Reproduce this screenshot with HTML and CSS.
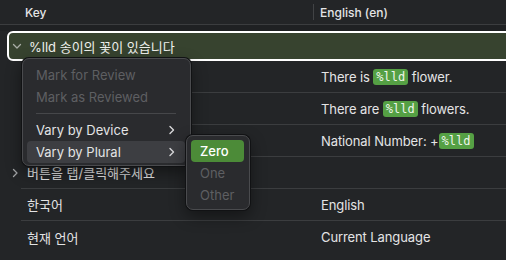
FILE: index.html
```html
<!DOCTYPE html>
<html lang="en">
<head>
<meta charset="UTF-8" />
<title>String Catalog</title>
<link rel="stylesheet" href="styles.css">
</head>
<body>
  <div class="catalog">
    <div class="header">
      <div class="head-key">Key</div>
      <div class="head-divider"></div>
      <div class="head-en">English (en)</div>
    </div>

    <div class="rows">
      <div class="row-selected">
        <svg class="disc-icon" width="10" height="10" viewBox="0 0 10 10"><path d="M1.5 3.5 L5 7 L8.5 3.5" fill="none" stroke="#a9ada6" stroke-width="1.3" stroke-linecap="round" stroke-linejoin="round"/></svg>
        <span class="sel-key">%lld 송이의 꽃이 있습니다</span>
      </div>

      <div class="row">
        <div class="disc"></div>
        <div class="cells">
          <div class="key"></div>
          <div class="en">There is <span class="token">%lld</span> flower.</div>
        </div>
      </div>
      <div class="row">
        <div class="disc"></div>
        <div class="cells">
          <div class="key"></div>
          <div class="en">There are <span class="token">%lld</span> flowers.</div>
        </div>
      </div>
      <div class="row">
        <div class="disc"></div>
        <div class="cells">
          <div class="key"></div>
          <div class="en">National Number: +<span class="token">%lld</span></div>
        </div>
      </div>
      <div class="row">
        <div class="disc">
          <svg width="10" height="10" viewBox="0 0 10 10"><path d="M3.5 1.5 L7 5 L3.5 8.5" fill="none" stroke="#a2a4a6" stroke-width="1.3" stroke-linecap="round" stroke-linejoin="round"/></svg>
        </div>
        <div class="cells">
          <div class="key">버튼을 탭/클릭해주세요</div>
          <div class="en"></div>
        </div>
      </div>
      <div class="row">
        <div class="disc"></div>
        <div class="cells">
          <div class="key">한국어</div>
          <div class="en">English</div>
        </div>
      </div>
      <div class="row last">
        <div class="disc"></div>
        <div class="cells">
          <div class="key">현재 언어</div>
          <div class="en">Current Language</div>
        </div>
      </div>
    </div>
  </div>

  <div class="menu">
    <div class="menu-item disabled">Mark for Review</div>
    <div class="menu-item disabled">Mark as Reviewed</div>
    <div class="menu-sep"></div>
    <div class="menu-item">Vary by Device
      <svg class="sub-arrow" width="8" height="10" viewBox="0 0 8 10"><path d="M2 1.5 L5.5 5 L2 8.5" fill="none" stroke="#d8d8da" stroke-width="1.4" stroke-linecap="round" stroke-linejoin="round"/></svg>
    </div>
    <div class="menu-item active">Vary by Plural
      <svg class="sub-arrow" width="8" height="10" viewBox="0 0 8 10"><path d="M2 1.5 L5.5 5 L2 8.5" fill="none" stroke="#d8d8da" stroke-width="1.4" stroke-linecap="round" stroke-linejoin="round"/></svg>
    </div>
  </div>

  <div class="submenu">
    <div class="menu-item chosen">Zero</div>
    <div class="menu-item disabled">One</div>
    <div class="menu-item disabled">Other</div>
  </div>
</body>
</html>
```

FILE: styles.css
```css
:root {
  --bg: #232527;
  --line: #3b3d3f;
  --text: #e3e4e5;
  --dim: #5e5f62;
  --sel-bg: #37432f;
  --menu-bg: #2a2b2e;
  --menu-hover: #3d3e42;
  --green: #4c8b38;
  --token: #55a044;
}
* {
  box-sizing: border-box;
}
body {
  margin: 0;
  width: 506px;
  height: 260px;
  overflow: hidden;
  background: var(--bg);
  color: var(--text);
  font-family: Inter, "Noto Sans CJK KR", sans-serif;
  font-size: 13px;
  position: relative;
}
.header {
  height: 25px;
  display: flex;
  align-items: center;
  border-bottom: 1px solid var(--line);
  font-size: 12px;
  font-weight: 500;
}
.head-key {
  width: 313px;
  padding-left: 25px;
}
.head-divider {
  width: 1px;
  height: 16px;
  background: #414345;
}
.head-en {
  padding-left: 6px;
}
.rows {
  padding-top: 6px;
  background: linear-gradient(#1f2123, #1f2123) top / 100% 6px no-repeat;
}
.row-selected {
  height: 30px;
  margin-left: 7px;
  margin-right: -4px;
  border: 2px solid #ffffff;
  border-radius: 6px 0 0 6px;
  background: var(--sel-bg);
  display: flex;
  align-items: center;
  padding-left: 3px;
}
.disc-icon {
  margin-right: 7px;
}
.sel-key {
  color: #eef0ec;
}
.row {
  height: 32px;
  display: flex;
}
.disc {
  width: 21px;
  display: flex;
  align-items: center;
  justify-content: flex-start;
  padding-left: 10px;
}
.cells {
  flex: 1;
  display: flex;
  align-items: center;
  border-bottom: 1px solid var(--line);
}
.row.last .cells {
  border-bottom: none;
}
.key {
  width: 300px;
  padding-left: 6px;
}
.en {
  display: flex;
  align-items: center;
  white-space: pre;
  letter-spacing: -0.1px;
}
.token {
  font-family: "DejaVu Sans Mono", monospace;
  font-size: 12px;
  letter-spacing: 0;
  background: var(--token);
  color: #eef5ea;
  border-radius: 3px;
  padding: 1px 3px;
  line-height: 14px;
}
.menu,
.submenu {
  position: absolute;
  background: var(--menu-bg);
  border: 1px solid #4a4b4e;
  border-radius: 7px;
  box-shadow: 0 0 0 1px #111214, 0 6px 16px rgba(0, 0, 0, 0.45);
}
.menu {
  left: 22px;
  top: 58px;
  width: 169px;
  padding: 5px 5px 2px 4px;
}
.submenu {
  left: 186px;
  top: 135px;
  width: 64px;
  padding: 4px 5px 3px 4px;
}
.menu-item {
  height: 22px;
  display: flex;
  align-items: center;
  padding-left: 9px;
  border-radius: 4px;
  position: relative;
}
.menu-item.disabled {
  color: var(--dim);
}
.menu-item.active {
  background: var(--menu-hover);
}
.menu-item.chosen {
  background: var(--green);
  color: #ffffff;
  font-weight: 500;
}
.sub-arrow {
  margin-left: auto;
  margin-right: 9px;
}
.menu-sep {
  height: 11px;
  display: flex;
  align-items: center;
  padding: 0 9px;
}
.menu-sep::before {
  content: "";
  flex: 1;
  height: 1px;
  background: #46474a;
}
```
